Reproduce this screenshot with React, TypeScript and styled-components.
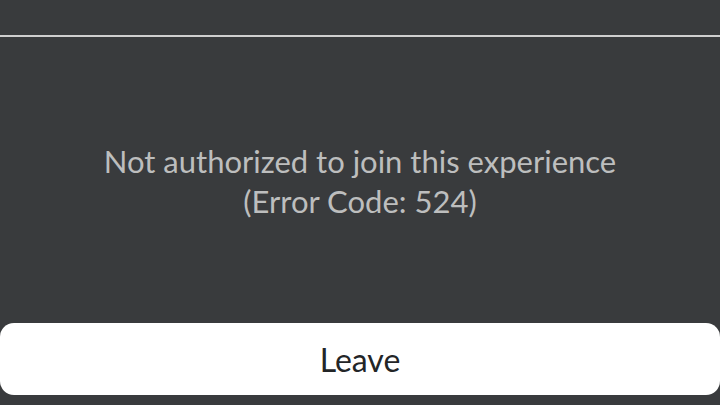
import styled, { createGlobalStyle } from "styled-components";

const GlobalStyle = createGlobalStyle`
  html, body {
    margin: 0;
    padding: 0;
    background: #393b3d;
  }
`;

function App() {
  return (
    <>
      <GlobalStyle />
      <Screen>
        <TopBar />
        <Message>
          <Line>Not authorized to join this experience</Line>
          <Line>(Error Code: 524)</Line>
        </Message>
        <LeaveButton>Leave</LeaveButton>
      </Screen>
    </>
  );
}

const Screen = styled.div`
  display: flex;
  flex-direction: column;
  width: 720px;
  height: 405px;
  background: #393b3d;
  font-family: Lato, "Open Sans", sans-serif;
  overflow: hidden;
`;

const TopBar = styled.div`
  height: 35px;
  border-bottom: 2px solid #cfcfcf;
  flex: 0 0 auto;
`;

const Message = styled.div`
  flex: 1;
  display: flex;
  flex-direction: column;
  align-items: center;
  padding-top: 104px;
`;

const Line = styled.div`
  color: #bdbebe;
  font-size: 31px;
  line-height: 40px;
`;

const LeaveButton = styled.button`
  height: 72px;
  margin: 0 0 10px;
  border: none;
  border-radius: 14px;
  background: #ffffff;
  color: #232527;
  font-family: Lato, "Open Sans", sans-serif;
  font-size: 32px;
  cursor: pointer;
`;

export default App;
